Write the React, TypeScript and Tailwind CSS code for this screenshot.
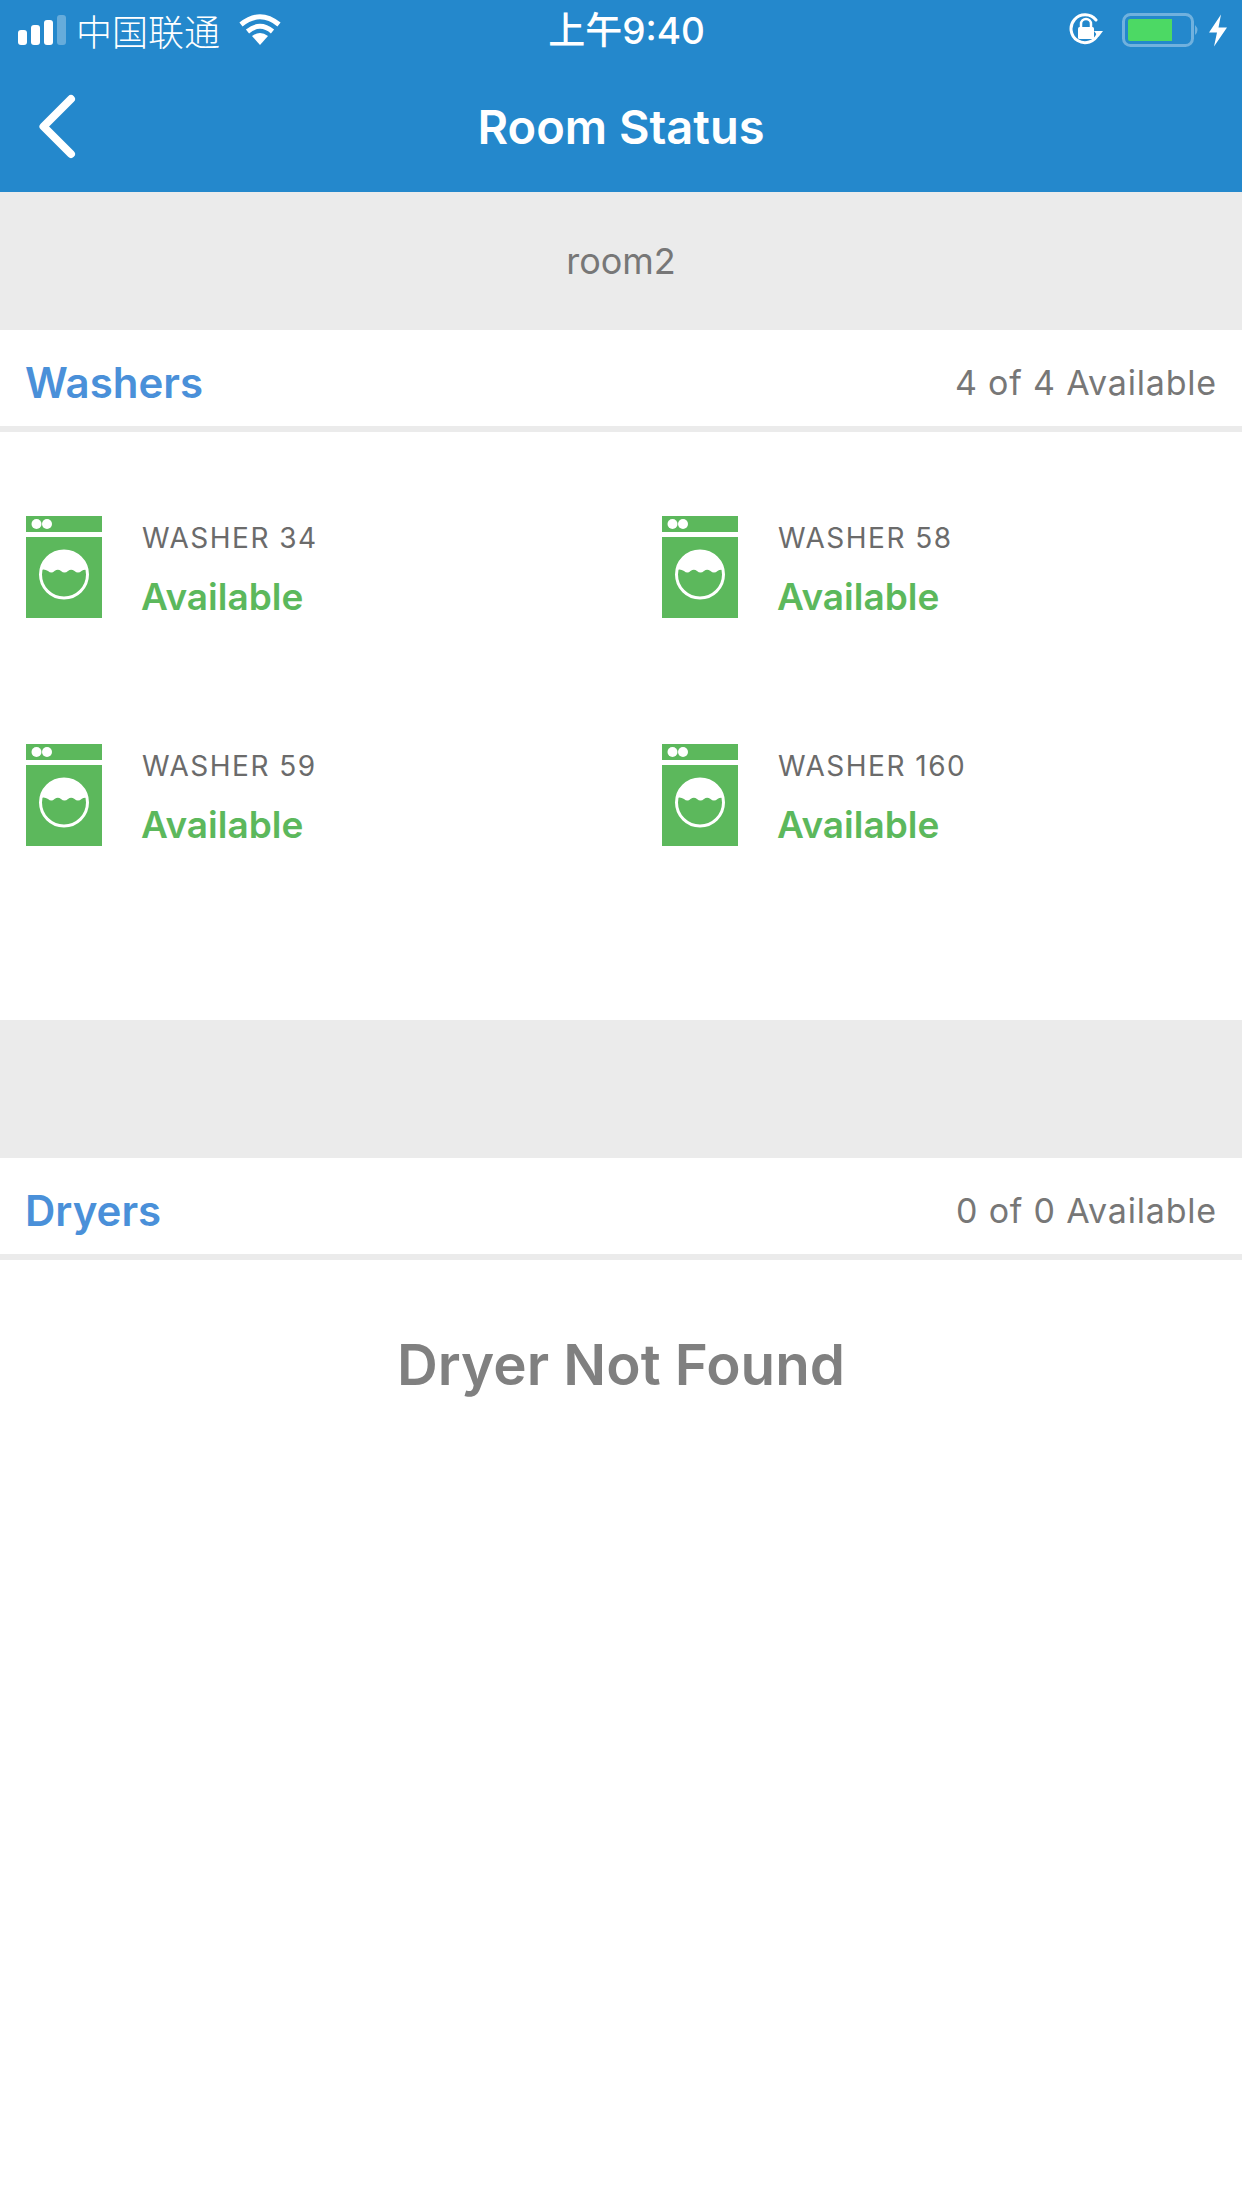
import React from 'react';

const WasherIcon: React.FC = () => (
  <svg width="76" height="102" viewBox="0 0 76 102" className="shrink-0">
    <rect x="0" y="0" width="76" height="16" fill="#5cb85c" />
    <circle cx="10.500" cy="8" r="5" fill="#fff" />
    <circle cx="21" cy="8" r="5" fill="#fff" />
    <rect x="0" y="21" width="76" height="81" fill="#5cb85c" />
    <circle cx="38" cy="58.500" r="23.500" fill="#5cb85c" stroke="#fff" strokeWidth="3" />
    <path
      d="M14.500 54 A24 24 0 0 1 61.500 54 Q58 53 55.500 55 Q52 58 48.500 55 Q45 52.500 42 55 Q38.500 58 35 55 Q32 52.500 28.500 55 Q25.500 58 22 55 Q18.500 52.500 14.500 54 Z"
      fill="#fff"
    />
  </svg>
);

const WasherCard: React.FC<{ name: string }> = ({ name }) => (
  <div className="flex items-start gap-[40px] pl-[26px] h-[102px]">
    <WasherIcon />
    <div className="flex flex-col">
      <div className="text-[28px] leading-[34px] text-[#6b6b6b] tracking-[1.5px] mt-[5px]">{name}</div>
      <div className="text-[37px] leading-[44px] font-semibold text-[#5cb85c] mt-[20px] -ml-[1px]">Available</div>
    </div>
  </div>
);

const SectionHeader: React.FC<{ title: string; count: string }> = ({ title, count }) => (
  <div className="h-[102px] bg-white border-b-[6px] border-[#ebebeb] flex items-center justify-between pl-[25px] pr-[25px] pt-[8px]">
    <div className="text-[42px] font-semibold text-[#4a90d9]">{title}</div>
    <div className="text-[34px] text-[#777777] tracking-[0.8px]">{count}</div>
  </div>
);

export default function App() {
  return (
    <div className="w-[1242px] h-[2208px] bg-white font-['Inter','Noto_Sans_CJK_SC',sans-serif] overflow-hidden">
      <div className="h-[192px] bg-[#2488cc] text-white">
        <div className="h-[60px] grid grid-cols-3 items-center">
          <div className="flex items-center pl-[18px]">
            <svg width="48" height="30" viewBox="0 0 48 30">
              <rect x="0" y="15" width="9" height="15" rx="3" fill="#fff" />
              <rect x="13" y="10" width="9" height="20" rx="3" fill="#fff" />
              <rect x="26" y="5" width="9" height="25" rx="3" fill="#fff" />
              <rect x="39" y="0" width="9" height="30" rx="3" fill="#fff" fillOpacity="0.3" />
            </svg>
            <span className="text-[36px] ml-[10px] font-['Noto_Sans_CJK_SC',sans-serif] font-light">中国联通</span>
            <svg width="44" height="32" viewBox="0 0 44 32" className="ml-[18px]">
              <path d="M22 31 L14 22 Q22 16 30 22 Z" fill="#fff" />
              <path d="M9.500 17.500 Q22 7 34.500 17.500" fill="none" stroke="#fff" strokeWidth="5" />
              <path d="M3 10.500 Q22 -5 41 10.500" fill="none" stroke="#fff" strokeWidth="5" />
            </svg>
          </div>
          <div className="text-center text-[37px] font-medium pl-[11px] pt-[2px]">上午9:40</div>
          <div className="flex items-center justify-end pr-[15px]">
            <svg width="34" height="34" viewBox="0 0 34 34">
              <path d="M29 21 A14 14 0 1 1 27 7" fill="none" stroke="#fff" strokeWidth="3" strokeLinecap="round" />
              <path d="M25 18 H34 L29.500 24 Z" fill="#fff" />
              <rect x="9" y="14" width="16" height="12" rx="1.500" fill="#fff" />
              <path d="M12 14 V11 A5 5 0 0 1 22 11 V14" fill="none" stroke="#fff" strokeWidth="2.500" />
            </svg>
            <svg width="78" height="34" viewBox="0 0 78 34" className="ml-[19px]">
              <rect x="1.500" y="1.500" width="69" height="31" rx="7" fill="none" stroke="#fff" strokeOpacity="0.35" strokeWidth="3" />
              <path d="M6 8 a2 2 0 0 1 2 -2 H50 V28 H8 a2 2 0 0 1 -2 -2 Z" fill="#4cd964" />
              <path d="M73 12 Q78 17 73 22 Z" fill="#fff" fillOpacity="0.35" />
            </svg>
            <svg width="18" height="33" viewBox="0 0 18 32" className="ml-[9px]">
              <path d="M12 0 L0 18 H8 L5 32 L18 13 H9.500 Z" fill="#fff" />
            </svg>
          </div>
        </div>
        <div className="h-[132px] relative flex items-center justify-center">
          <svg width="48" height="72" viewBox="0 0 48 72" className="absolute left-[35px] top-[33px]">
            <path d="M36 6 L8.500 33.500 L36 61" fill="none" stroke="#fff" strokeWidth="8" strokeLinecap="round" strokeLinejoin="round" />
          </svg>
          <div className="text-[47px] font-semibold mt-[2px]">Room Status</div>
        </div>
      </div>

      <div className="h-[138px] bg-[#ebebeb] flex items-center justify-center text-[36px] text-[#777777]">room2</div>

      <SectionHeader title="Washers" count="4 of 4 Available" />
      <div className="h-[588px] pt-[84px] grid grid-cols-[636px_1fr] content-start gap-y-[126px]">
        <WasherCard name="WASHER 34" />
        <WasherCard name="WASHER 58" />
        <WasherCard name="WASHER 59" />
        <WasherCard name="WASHER 160" />
      </div>

      <div className="h-[138px] bg-[#ebebeb]" />

      <SectionHeader title="Dryers" count="0 of 0 Available" />
      <div className="pt-[63px] text-center text-[56.500px] font-semibold text-[#808080]">Dryer Not Found</div>
    </div>
  );
}
